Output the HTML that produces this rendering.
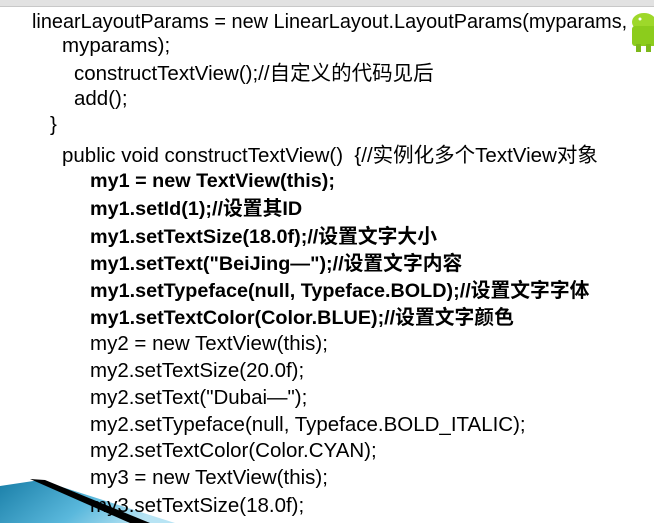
<!DOCTYPE html><html><head><meta charset="utf-8"><style>
body{margin:0;width:654px;height:523px;overflow:hidden;background:#fff;position:relative;font-family:"Liberation Sans","Noto Sans CJK SC",sans-serif;color:#000}
.t{position:absolute;white-space:nowrap;font-size:20.5px;line-height:20px;transform-origin:0 0}
b{font-weight:bold;font-size:19.8px}
</style></head><body>
<div style="position:absolute;left:0;top:0;width:654px;height:6px;background:#e2e2e2;border-bottom:1px solid #c8c8c8"></div>
<svg style="position:absolute;left:628px;top:8px" width="26" height="44"><ellipse cx="16" cy="14" rx="12" ry="9" fill="#9ed82a"/><rect x="4" y="18" width="24" height="20" rx="3" fill="#8ccc1c"/><rect x="8" y="36" width="5" height="8" fill="#7cb81a"/><rect x="18" y="36" width="5" height="8" fill="#7cb81a"/><circle cx="12" cy="11" r="1.5" fill="#fff"/></svg>
<div class="t" style="left:32px;top:12px;transform:scaleX(0.97)">linearLayoutParams = new LinearLayout.LayoutParams(myparams,</div>
<div class="t" style="left:62px;top:36px">myparams);</div>
<div class="t" style="left:74px;top:64px">constructTextView();//自定义的代码见后</div>
<div class="t" style="left:74px;top:89px">add();</div>
<div class="t" style="left:50px;top:115px">}</div>
<div class="t" style="left:62px;top:146px">public void constructTextView()&nbsp; {//实例化多个TextView对象</div>
<div class="t" style="left:90px;top:171px"><b>my1 = new TextView(this);</b></div>
<div class="t" style="left:90px;top:199px"><b>my1.setId(1);//设置其ID</b></div>
<div class="t" style="left:90px;top:227px"><b>my1.setTextSize(18.0f);//设置文字大小</b></div>
<div class="t" style="left:90px;top:254px"><b>my1.setText("BeiJing—");//设置文字内容</b></div>
<div class="t" style="left:90px;top:281px"><b>my1.setTypeface(null, Typeface.BOLD);//设置文字字体</b></div>
<div class="t" style="left:90px;top:308px"><b>my1.setTextColor(Color.BLUE);//设置文字颜色</b></div>
<div class="t" style="left:90px;top:334px">my2 = new TextView(this);</div>
<div class="t" style="left:90px;top:361px">my2.setTextSize(20.0f);</div>
<div class="t" style="left:90px;top:388px">my2.setText("Dubai—");</div>
<div class="t" style="left:90px;top:415px">my2.setTypeface(null, Typeface.BOLD_ITALIC);</div>
<div class="t" style="left:90px;top:441px">my2.setTextColor(Color.CYAN);</div>
<div class="t" style="left:90px;top:468px">my3 = new TextView(this);</div>
<svg style="position:absolute;left:0;top:470px" width="200" height="53"><defs><linearGradient id="g" x1="0" y1="0" x2="1" y2="0.3"><stop offset="0" stop-color="#1a7fa8"/><stop offset="0.6" stop-color="#5ab8dc"/><stop offset="1" stop-color="#b8e4f4"/></linearGradient></defs><polygon points="0,16 40,10 175,53 0,53" fill="url(#g)"/><polygon points="30,9 45,10 150,53 130,53" fill="#000"/></svg>
<div class="t" style="left:90px;top:496px">my3.setTextSize(18.0f);</div>
</body></html>
